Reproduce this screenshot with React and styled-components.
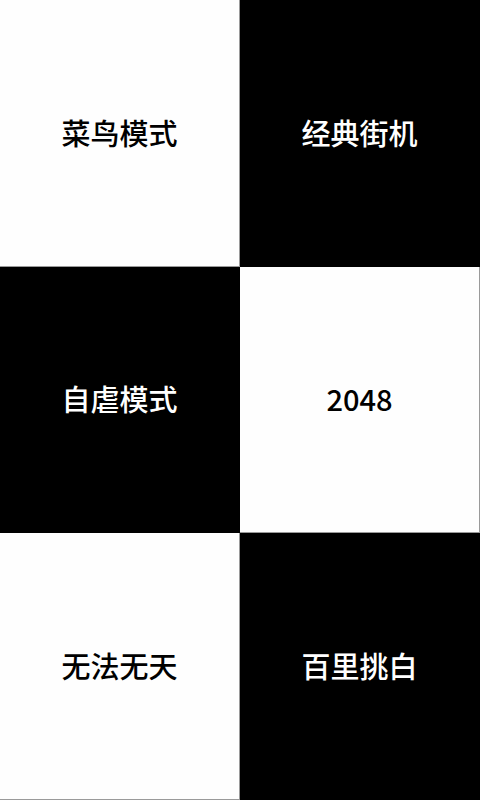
import React from "react";
import styled, { createGlobalStyle } from "styled-components";

const Global = createGlobalStyle`
  html, body, #root { margin: 0; padding: 0; height: 100%; }
  body { background: #000; }
`;

const Board = styled.div`
  display: grid;
  grid-template-columns: 1fr 1fr;
  grid-template-rows: repeat(3, 1fr);
  width: 480px;
  height: 800px;
`;

const Tile = styled.div`
  display: flex;
  align-items: center;
  justify-content: center;
  box-sizing: border-box;
  background: ${(p) => (p.$dark ? "#000" : "#fefefe")};
  color: ${(p) => (p.$dark ? "#fff" : "#000")};
  border-right: 1px solid ${(p) => (p.$dark ? "#000" : "#9a9a9a")};
  border-bottom: 1px solid ${(p) => (p.$dark ? "#000" : "#9a9a9a")};
  font-family: "Noto Sans CJK SC", "Noto Sans", sans-serif;
  font-weight: 500;
  font-size: 29px;
  padding-bottom: 2px;
`;

const modes = [
  { label: "菜鸟模式", dark: false },
  { label: "经典街机", dark: true },
  { label: "自虐模式", dark: true },
  { label: "2048", dark: false },
  { label: "无法无天", dark: false },
  { label: "百里挑白", dark: true },
];

export default function App() {
  return (
    <>
      <Global />
      <Board>
        {modes.map((m) => (
          <Tile key={m.label} $dark={m.dark}>
            {m.label}
          </Tile>
        ))}
      </Board>
    </>
  );
}
